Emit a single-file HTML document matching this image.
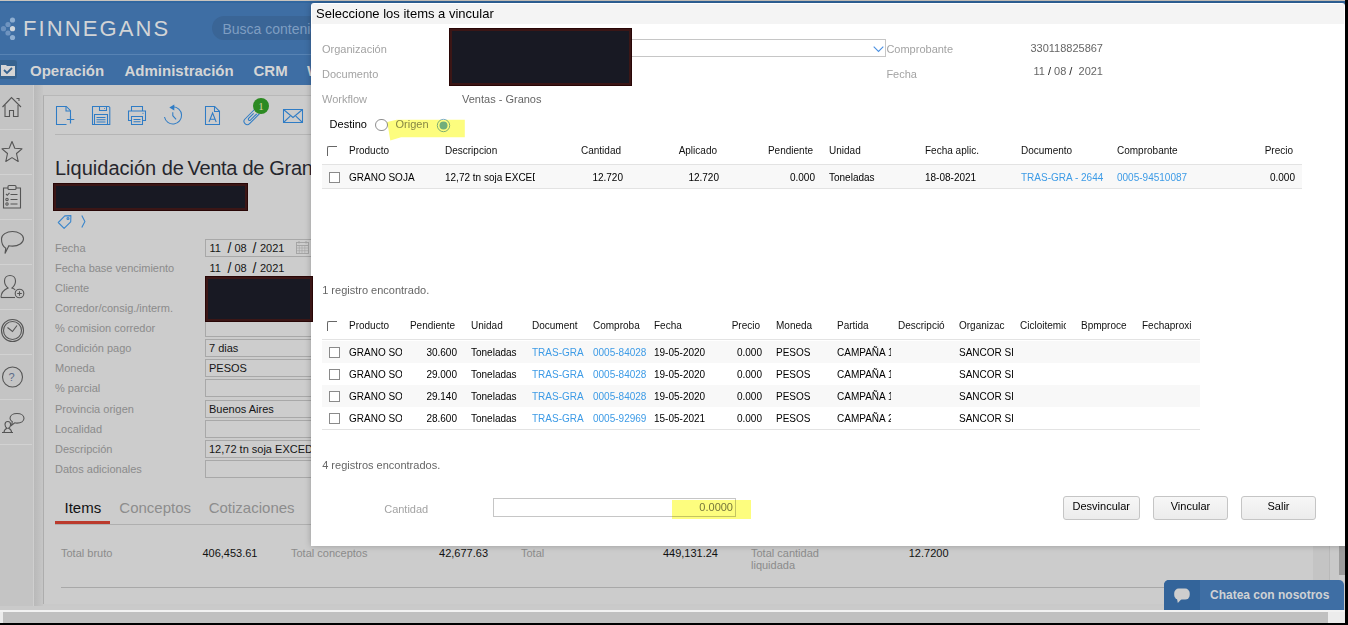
<!DOCTYPE html>
<html><head><meta charset="utf-8">
<style>
*{box-sizing:border-box;margin:0;padding:0}
html,body{width:1348px;height:625px;overflow:hidden;background:#c9c9c9;font-family:"Liberation Sans",sans-serif;position:relative}
.a{position:absolute;white-space:nowrap;line-height:1}
.t10{font-size:10px}.t11{font-size:11px}
</style></head><body>
<!-- ===== BACKGROUND PAGE (dimmed) ===== -->
<div class="a" style="left:0;top:0;width:1348px;height:1px;background:#c9c4be"></div>
<div class="a" id="header" style="left:0;top:1px;width:1348px;height:84px;background:#3e6ea4"></div>
<div class="a" style="left:0;top:1px;width:1348px;height:2px;background:#3167a0"></div>
<div class="a" style="left:0;top:54px;width:1348px;height:1px;background:#5783b4"></div>
<!-- logo -->
<svg class="a" style="left:0;top:15px" width="18" height="26" viewBox="0 0 18 26">
 <circle cx="12.5" cy="5" r="2.6" fill="#8eaed1"/>
 <circle cx="8" cy="9.5" r="2.6" fill="#6f94c0"/>
 <circle cx="3.5" cy="13.7" r="2.6" fill="#6a90bd"/>
 <circle cx="12.5" cy="13.7" r="2.6" fill="#d0d6dc"/>
 <circle cx="8" cy="18" r="2.6" fill="#6f94c0"/>
 <circle cx="12.5" cy="22.5" r="2.6" fill="#8eaed1"/>
</svg>
<div class="a" style="left:23px;top:18px;font-size:22px;color:#d2d4d6;letter-spacing:2.1px;font-weight:400">FINNEGANS</div>
<div class="a" style="left:212px;top:16px;width:140px;height:24px;border-radius:12px;background:#3a6596"></div>
<div class="a" style="left:222.4px;top:22px;font-size:14px;color:#7f9ec2">Busca contenido</div>
<!-- nav -->
<div class="a" style="left:0;top:60px;width:17px;height:19px;border-radius:0 3px 3px 0;background:#36628f"></div>
<svg class="a" style="left:1px;top:64px" width="14" height="12" viewBox="0 0 14 12"><path d="M0 1h5l1 1h8v10H0z" fill="#d5d5d5"/><path d="M3 6l3 3 5-5" stroke="#36628f" stroke-width="1.8" fill="none"/></svg>
<div class="a" style="left:30px;top:63px;font-size:15px;font-weight:700;color:#d5d5d5">Operación</div>
<div class="a" style="left:124.5px;top:63px;font-size:15px;font-weight:700;color:#d5d5d5">Administración</div>
<div class="a" style="left:253.5px;top:63px;font-size:15px;font-weight:700;color:#d5d5d5">CRM</div>
<div class="a" style="left:307px;top:63px;font-size:15px;font-weight:700;color:#d5d5d5">W</div>

<!-- sidebar -->
<div class="a" style="left:0;top:85px;width:33px;height:521px;background:#c4c4c4"></div>
<div class="a" style="left:33px;top:85px;width:1px;height:521px;background:#cfcfcf"></div>
<div class="a" style="left:34px;top:85px;width:9px;height:521px;background:linear-gradient(to right,#b9b9b9,#c6c6c6)"></div>
<div id="sidebar-seps"></div>

<!-- panel -->
<div class="a" style="left:43px;top:95px;width:1305px;height:509px;background:#cccccc;border-left:1px solid #adadad;border-top:1px solid #b8b8b8"></div>
<div class="a" style="left:55px;top:134px;width:260px;height:1px;background:#b5b5b5"></div>

<!--BG-START-->
<div class="a" style="left:0px;top:129px;width:32px;height:1px;background:#d2d2d2;"></div>
<div class="a" style="left:0px;top:174px;width:32px;height:1px;background:#d2d2d2;"></div>
<div class="a" style="left:0px;top:219px;width:32px;height:1px;background:#d2d2d2;"></div>
<div class="a" style="left:0px;top:264px;width:32px;height:1px;background:#d2d2d2;"></div>
<div class="a" style="left:0px;top:309px;width:32px;height:1px;background:#d2d2d2;"></div>
<div class="a" style="left:0px;top:354px;width:32px;height:1px;background:#d2d2d2;"></div>
<div class="a" style="left:0px;top:399px;width:32px;height:1px;background:#d2d2d2;"></div>
<div class="a" style="left:0px;top:444px;width:32px;height:1px;background:#d2d2d2;"></div>
<svg class="a" style="left:0;top:85px" width="32" height="360" viewBox="0 85 32 360" fill="none" stroke="#555" stroke-width="1.1">
<path d="M2.5 107 L11.5 97.5 L21 107"/><path d="M16.5 98.5h2.5v2.5"/><path d="M5 105v11.5h4.5v-6h4v6h4.5V105"/>
<path d="M12 141.5 L14.8 148.3 L22 148.8 L16.5 153.5 L18.2 161.5 L12 157.6 L5.8 161.5 L7.5 153.5 L2 148.8 L9.2 148.3 Z" stroke-linejoin="round"/>
<path d="M8 188h-4.5v20h17v-20H16"/><rect x="8" y="185.5" width="8" height="4" rx="1"/>
<path d="M6 194l1.3 1.3 2.2-2.5"/><circle cx="7" cy="199.5" r="1.2"/><circle cx="7" cy="204" r="1.2"/><path d="M10.5 194.5h7M10.5 199.5h7M10.5 204h7"/>
<path d="M12.5 231.5c6 0 11 3.2 11 7.3s-5 7.3-11 7.3c-1.3 0-2.5-.1-3.6-.4L5 253.5l.8-5.3C3 246.8 1.5 243 1.5 238.8c0-4.1 5-7.3 11-7.3z"/>
<path d="M1 297.5c0-5.5 3.5-8 7-9.5-2.5-2-3.5-4.5-3.5-7 0-3.5 2.5-5.5 5.5-5.5s5.5 2 5.5 5.5c0 2.5-1 5-3.5 7 1.2.5 2.3 1 3.2 1.8"/><path d="M1 297.5h14"/><circle cx="19.5" cy="293.5" r="4.3"/><path d="M17.2 293.5h4.6M19.5 291.2v4.6"/>
<circle cx="12.5" cy="330.5" r="11"/><circle cx="12.5" cy="330.5" r="9"/><path d="M7.5 327.5l5 4 4.5-6"/>
<circle cx="12.5" cy="377" r="10"/>
<path d="M2 432.5h11M4 432.5c0-2.5 1.5-3.5 3-4.2-1.4-1-2-2.5-2-3.8 0-1.8 1.2-3 2.8-3s2.8 1.2 2.8 3c0 1.3-.6 2.8-2 3.8 1.5.7 3 1.7 3 4.2"/><path d="M17 413.5c4 0 7 2 7 4.8s-3 4.8-7 4.8c-.8 0-1.5-.1-2.2-.3l-3.3 2.5.8-3.5c-1.5-.9-2.3-2.1-2.3-3.5 0-2.8 3-4.8 7-4.8z"/>
</svg>
<div class="a" style="left:8.5px;top:372px;font-size:11px;color:#5a6a88">?</div>
<svg class="a" style="left:50px;top:95px" width="260" height="35" viewBox="50 95 260 35" fill="none" stroke="#2f7cc5" stroke-width="1.05">
<path d="M66.5 124.5H56.5V106.5h9.8l4.2 4.2v5.3"/><path d="M66 106.5v4.5h4.5"/><path d="M70.5 116v7.5M66.8 119.5h7.5" stroke-width="1.2"/>
<path d="M92.5 106.5h16.3l1 1V124.5H92.5z"/><path d="M99.5 106.5v4h7v-4"/><circle cx="104.5" cy="108.5" r="0.5" fill="#2f7cc5" stroke="none"/><path d="M94.5 124.5v-10h13v10"/><path d="M96.5 117.5h9M96.5 119.7h9M96.5 121.9h9"/>
<path d="M131.5 111v-4.5h11v4.5"/><path d="M131 120.5h-2.5v-9.5h17v9.5H143"/><path d="M131.5 124.5v-8h11v8z"/><path d="M133.5 119.5h7M133.5 121.7h7"/><circle cx="143" cy="113.3" r="0.6" fill="#2f7cc5" stroke="none"/>
<path d="M164.5 117 A8.6 8.6 0 1 0 173 106.8"/><path d="M172.8 112.3v3.4l3.3 3.6"/>
<path d="M205.5 124.5V106.5h9.2l4.8 4.8V124.5z"/><path d="M214.5 106.5v5h5"/><path d="M209 122l3.6-9 3.6 9M210.3 119.3h4.6"/>
<path d="M259.6 113.6L249.6 123.6A3.25 3.25 0 0 1 245 119L255 109M256.8 113.8L250.4 120.2A1.3 1.3 0 0 1 248.6 118.4L253.6 113.4"/>
<path d="M283.5 109.5h19v13h-19z"/><path d="M283.5 109.5l9.5 8 9.5-8M283.5 122.5l6.7-6.3M302.5 122.5l-6.7-6.3"/>
</svg>
<svg class="a" style="left:160px;top:100px" width="20" height="20" viewBox="160 100 20 20"><path d="M169.3 107.6l5-3v6z" fill="#2f7cc5"/></svg>
<div class="a" style="left:253px;top:98px;width:16px;height:16px;border-radius:50%;background:#2c8a22"></div>
<div class="a" style="left:253px;top:100.5px;width:16px;text-align:center;font-size:11px;color:#d6d2a6;font-family:'Liberation Serif'">1</div>
<div class="a" style="left:55px;top:158px;font-size:20px;color:#26262c">Liquidación de </div>
<div class="a" style="left:187.5px;top:158px;font-size:20px;color:#26262c;letter-spacing:-0.3px">Venta de Granos</div>
<div class="a" style="left:53px;top:183px;width:195px;height:28px;background:#181923;border:1px solid #280606;box-shadow:inset 0 0 0 2px #3b1616"></div>
<svg class="a" style="left:55px;top:212px" width="35" height="20" viewBox="55 212 35 20" fill="none" stroke="#3a86cc" stroke-width="1.1">
<path d="M58.3 222.5l6.5-6.6 6.1-.3-.2 6.2-6.6 6.5z" stroke-linejoin="round"/><circle cx="68" cy="218.5" r="1"/><path d="M81.8 215.5l3.1 6-3.1 6"/></svg>
<div class="a" style="left:55px;top:243px;font-size:11px;color:#8b8b8b;">Fecha</div>
<div class="a" style="left:55px;top:263px;font-size:11px;color:#8b8b8b;">Fecha base vencimiento</div>
<div class="a" style="left:55px;top:283px;font-size:11px;color:#8b8b8b;">Cliente</div>
<div class="a" style="left:55px;top:303px;font-size:11px;color:#8b8b8b;">Corredor/consig./interm.</div>
<div class="a" style="left:55px;top:323px;font-size:11px;color:#8b8b8b;">% comision corredor</div>
<div class="a" style="left:55px;top:343px;font-size:11px;color:#8b8b8b;">Condición pago</div>
<div class="a" style="left:55px;top:363px;font-size:11px;color:#8b8b8b;">Moneda</div>
<div class="a" style="left:55px;top:383px;font-size:11px;color:#8b8b8b;">% parcial</div>
<div class="a" style="left:55px;top:404px;font-size:11px;color:#8b8b8b;">Provincia origen</div>
<div class="a" style="left:55px;top:424px;font-size:11px;color:#8b8b8b;">Localidad</div>
<div class="a" style="left:55px;top:444px;font-size:11px;color:#8b8b8b;">Descripción</div>
<div class="a" style="left:55px;top:464px;font-size:11px;color:#8b8b8b;">Datos adicionales</div>
<div class="a" style="left:205px;top:239px;width:120px;height:18px;background:#cdcdcd;border:1px solid #a8a8a8;border-right:none"></div>
<div class="a" style="left:205px;top:319px;width:120px;height:18px;background:#cdcdcd;border:1px solid #a8a8a8;border-right:none"></div>
<div class="a" style="left:205px;top:339px;width:120px;height:18px;background:#cdcdcd;border:1px solid #a8a8a8;border-right:none"></div>
<div class="a" style="left:209px;top:343px;font-size:11px;color:#151515;">7 dias</div>
<div class="a" style="left:205px;top:359px;width:120px;height:18px;background:#cdcdcd;border:1px solid #a8a8a8;border-right:none"></div>
<div class="a" style="left:209px;top:363px;font-size:11px;color:#151515;">PESOS</div>
<div class="a" style="left:205px;top:379px;width:120px;height:18px;background:#cdcdcd;border:1px solid #a8a8a8;border-right:none"></div>
<div class="a" style="left:205px;top:400px;width:120px;height:18px;background:#cdcdcd;border:1px solid #a8a8a8;border-right:none"></div>
<div class="a" style="left:209px;top:404px;font-size:11px;color:#151515;">Buenos Aires</div>
<div class="a" style="left:205px;top:420px;width:120px;height:18px;background:#cdcdcd;border:1px solid #a8a8a8;border-right:none"></div>
<div class="a" style="left:205px;top:440px;width:120px;height:18px;background:#cdcdcd;border:1px solid #a8a8a8;border-right:none"></div>
<div class="a" style="left:209px;top:444px;font-size:11px;color:#151515;">12,72 tn soja EXCEDENTE</div>
<div class="a" style="left:205px;top:460px;width:120px;height:18px;background:#cdcdcd;border:1px solid #a8a8a8;border-right:none"></div>
<div class="a" style="left:209.5px;top:243px;font-size:11px;color:#151515;">11</div>
<div class="a" style="left:227.5px;top:241px;font-size:14px;font-weight:400;color:#151515">/</div>
<div class="a" style="left:234.5px;top:243px;font-size:11px;color:#151515;">08</div>
<div class="a" style="left:252.5px;top:241px;font-size:14px;font-weight:400;color:#151515">/</div>
<div class="a" style="left:260px;top:243px;font-size:11px;color:#151515;">2021</div>
<div class="a" style="left:209.5px;top:263px;font-size:11px;color:#151515;">11</div>
<div class="a" style="left:227.5px;top:261px;font-size:14px;font-weight:400;color:#151515">/</div>
<div class="a" style="left:234.5px;top:263px;font-size:11px;color:#151515;">08</div>
<div class="a" style="left:252.5px;top:261px;font-size:14px;font-weight:400;color:#151515">/</div>
<div class="a" style="left:260px;top:263px;font-size:11px;color:#151515;">2021</div>
<svg class="a" style="left:295px;top:240px" width="16" height="15" viewBox="295 240 16 15" fill="none" stroke="#a2a2a2" stroke-width="0.9">
<rect x="296.5" y="242.5" width="12" height="11"/><path d="M296.5 245.5h12M299 241v2.5M306 241v2.5"/>
<path d="M296.5 248h12M296.5 250.7h12M299.3 245.5v8M302 245.5v8M304.8 245.5v8" stroke-width="0.6"/></svg>
<div class="a" style="left:64.5px;top:500px;font-size:15px;color:#121212;">Items</div>
<div class="a" style="left:119.3px;top:500px;font-size:15px;color:#8d8d8d;">Conceptos</div>
<div class="a" style="left:208.7px;top:500px;font-size:15px;color:#8d8d8d;">Cotizaciones</div>
<div class="a" style="left:55px;top:524px;width:1260px;height:1px;background:#afafaf;"></div>
<div class="a" style="left:55px;top:521px;width:55px;height:3px;background:#bb3a2c;"></div>
<div class="a" style="left:61px;top:548px;font-size:11px;color:#8b8b8b;">Total bruto</div>
<div class="a" style="right:1090.5px;top:548px;font-size:11px;color:#111;">406,453.61</div>
<div class="a" style="left:291px;top:548px;font-size:11px;color:#8b8b8b;">Total conceptos</div>
<div class="a" style="right:860px;top:548px;font-size:11px;color:#111;">42,677.63</div>
<div class="a" style="left:521px;top:548px;font-size:11px;color:#8b8b8b;">Total</div>
<div class="a" style="right:630px;top:548px;font-size:11px;color:#111;">449,131.24</div>
<div class="a" style="left:751px;top:548px;font-size:11px;color:#8b8b8b;">Total cantidad</div>
<div class="a" style="right:399.5px;top:548px;font-size:11px;color:#111;">12.7200</div>
<div class="a" style="left:751px;top:560px;font-size:11px;color:#8b8b8b;">liquidada</div>
<div class="a" style="left:61px;top:587px;width:1250px;height:1px;background:#a8a8a8;"></div>
<div class="a" style="left:1313px;top:95px;width:16px;height:511px;background:#c4c4c4;"></div>
<div class="a" style="left:1329px;top:95px;width:1px;height:511px;background:#b9b9b9;"></div>
<div class="a" style="left:1330px;top:95px;width:9px;height:511px;background:#c9c9c9;"></div>
<div class="a" style="left:1339px;top:85px;width:6px;height:490px;background:#9c9c9c;"></div>
<!--BG-END-->

<!-- bottom bar -->
<div class="a" style="left:0;top:606px;width:1348px;height:4px;background:#cacaca"></div>
<div class="a" style="left:0;top:610px;width:1348px;height:2px;background:#f2f2f2"></div>
<div class="a" style="left:0;top:612px;width:1348px;height:11px;background:#ececec"></div>
<div class="a" style="left:3px;top:612px;width:1325px;height:11px;background:#c0c0c0"></div>
<div class="a" style="left:0;top:623px;width:1348px;height:2px;background:#000"></div>

<!-- ===== DIALOG ===== -->
<div id="dlgwrap" style="position:absolute;left:0;top:0;width:1348px;height:625px;will-change:transform">
<div id="dialog" class="a" style="left:311px;top:3px;width:1034px;height:543px;background:#fff;border-radius:3px 3px 0 0;box-shadow:0 0 6px rgba(0,0,0,0.25)"></div>
<div class="a" style="left:312px;top:4px;width:1032px;height:20px;background:#f4f4f4"></div>
<div class="a" style="left:316px;top:7px;font-size:13px;color:#000">Seleccione los items a vincular</div>

<!--DLG-START-->
<div class="a" style="left:322.0px;top:44.0px;font-size:11px;color:#a3a3a3;">Organización</div>
<div class="a" style="left:322.0px;top:69.0px;font-size:11px;color:#a3a3a3;">Documento</div>
<div class="a" style="left:322.0px;top:94.0px;font-size:11px;color:#a3a3a3;">Workflow</div>
<div class="a" style="left:462.0px;top:94.0px;font-size:11px;color:#666;">Ventas - Granos</div>
<div class="a" style="left:631px;top:39px;width:255px;height:18px;background:#fff;border:1px solid #c6c6c6;border-left:none"></div>
<svg class="a" style="left:873px;top:46px" width="11" height="7" viewBox="0 0 11 7"><path d="M0.7 0.7L5.5 5.5L10.3 0.7" stroke="#4a90e2" stroke-width="1.1" fill="none"/></svg>
<div class="a" style="left:886.4px;top:44.0px;font-size:11px;color:#a3a3a3;">Comprobante</div>
<div class="a" style="left:886.4px;top:69.0px;font-size:11px;color:#a3a3a3;">Fecha</div>
<div class="a" style="right:245.0px;top:43.0px;font-size:11px;color:#666;">330118825867</div>
<div class="a" style="right:245.0px;top:66.0px;font-size:11px;color:#666;">11 <span style="color:#222">/</span> 08 <span style="color:#222">/</span>&nbsp; 2021</div>
<div class="a" style="left:449px;top:28px;width:183px;height:58px;background:#181923;border:1px solid #280606;box-shadow:inset 0 0 0 2px #3b1616"></div>
<div class="a" style="left:329.6px;top:119.0px;font-size:11px;color:#000;">Destino</div>
<div class="a" style="left:375px;top:118.5px;width:12.5px;height:12.5px;border-radius:50%;border:1px solid #8f8f8f;background:#fff"></div>
<div class="a" style="left:395.5px;top:119.0px;font-size:11px;color:#888888;">Origen</div>
<svg class="a" style="left:436px;top:117.5px" width="15" height="15" viewBox="0 0 15 15"><circle cx="7.5" cy="7.5" r="6.2" fill="#fff" stroke="#7fb0e6" stroke-width="1"/><circle cx="7.5" cy="7.5" r="4" fill="#72b0f8"/></svg>
<div class="a" style="left:327px;top:146px;width:10px;height:10px;background:transparent;border-top:1px solid #666;border-left:1px solid #666;border-top-left-radius:2px"></div>
<div class="a" style="left:349.0px;top:146.0px;font-size:10px;color:#111;">Producto</div>
<div class="a" style="left:445.0px;top:146.0px;font-size:10px;color:#111;">Descripcion</div>
<div class="a" style="right:727.0px;top:146.0px;font-size:10px;color:#111;">Cantidad</div>
<div class="a" style="right:631.0px;top:146.0px;font-size:10px;color:#111;">Aplicado</div>
<div class="a" style="right:535.0px;top:146.0px;font-size:10px;color:#111;">Pendiente</div>
<div class="a" style="left:829.0px;top:146.0px;font-size:10px;color:#111;">Unidad</div>
<div class="a" style="left:925.0px;top:146.0px;font-size:10px;color:#111;">Fecha aplic.</div>
<div class="a" style="left:1021.0px;top:146.0px;font-size:10px;color:#111;">Documento</div>
<div class="a" style="left:1117.0px;top:146.0px;font-size:10px;color:#111;">Comprobante</div>
<div class="a" style="right:55.0px;top:146.0px;font-size:10px;color:#111;">Precio</div>
<div class="a" style="left:322px;top:164px;width:980px;height:1px;background:#e3e3e3;"></div>
<div class="a" style="left:322px;top:165px;width:980px;height:23px;background:#f8f8f8;"></div>
<div class="a" style="left:322px;top:188px;width:980px;height:1px;background:#e3e3e3;"></div>
<div class="a" style="left:329px;top:172px;width:11px;height:11px;background:#fff;border:1px solid #8a8a8a"></div>
<div class="a" style="left:349.0px;top:171.0px;width:90.0px;overflow:hidden;padding-top:2px;font-size:10px;color:#000;">GRANO SOJA</div>
<div class="a" style="left:445.0px;top:171.0px;width:90.0px;overflow:hidden;padding-top:2px;font-size:10px;color:#000;">12,72 tn soja EXCEDENTE</div>
<div class="a" style="right:725.0px;top:173.0px;font-size:10px;color:#000;">12.720</div>
<div class="a" style="right:629.0px;top:173.0px;font-size:10px;color:#000;">12.720</div>
<div class="a" style="right:533.0px;top:173.0px;font-size:10px;color:#000;">0.000</div>
<div class="a" style="left:829.0px;top:173.0px;font-size:10px;color:#000;">Toneladas</div>
<div class="a" style="left:925.0px;top:173.0px;font-size:10px;color:#000;">18-08-2021</div>
<div class="a" style="left:1021.0px;top:173.0px;font-size:10px;color:#3d9be6;">TRAS-GRA - 2644</div>
<div class="a" style="left:1117.0px;top:173.0px;font-size:10px;color:#3d9be6;">0005-94510087</div>
<div class="a" style="right:53.0px;top:173.0px;font-size:10px;color:#000;">0.000</div>
<div class="a" style="left:322.2px;top:285.0px;font-size:11px;color:#666;">1 registro encontrado.</div>
<div class="a" style="left:327px;top:321px;width:10px;height:10px;background:transparent;border-top:1px solid #666;border-left:1px solid #666;border-top-left-radius:2px"></div>
<div class="a" style="left:349.0px;top:319.0px;width:53.0px;overflow:hidden;padding-top:2px;font-size:10px;color:#111;">Producto</div>
<div class="a" style="right:893.0px;top:321.0px;font-size:10px;color:#111;">Pendiente</div>
<div class="a" style="left:471.0px;top:319.0px;width:53.0px;overflow:hidden;padding-top:2px;font-size:10px;color:#111;">Unidad</div>
<div class="a" style="left:532.0px;top:319.0px;width:53.0px;overflow:hidden;padding-top:2px;font-size:10px;color:#111;">Document</div>
<div class="a" style="left:593.0px;top:319.0px;width:53.0px;overflow:hidden;padding-top:2px;font-size:10px;color:#111;">Comproba</div>
<div class="a" style="left:654.0px;top:319.0px;width:53.0px;overflow:hidden;padding-top:2px;font-size:10px;color:#111;">Fecha</div>
<div class="a" style="right:588.0px;top:321.0px;font-size:10px;color:#111;">Precio</div>
<div class="a" style="left:776.0px;top:319.0px;width:53.0px;overflow:hidden;padding-top:2px;font-size:10px;color:#111;">Moneda</div>
<div class="a" style="left:837.0px;top:319.0px;width:53.0px;overflow:hidden;padding-top:2px;font-size:10px;color:#111;">Partida</div>
<div class="a" style="left:898.0px;top:319.0px;width:53.0px;overflow:hidden;padding-top:2px;font-size:10px;color:#111;">Descripció</div>
<div class="a" style="left:959.0px;top:319.0px;width:53.0px;overflow:hidden;padding-top:2px;font-size:10px;color:#111;">Organizac</div>
<div class="a" style="left:1020.0px;top:319.0px;width:46.0px;overflow:hidden;padding-top:2px;font-size:10px;color:#111;">Cicloitemico</div>
<div class="a" style="left:1081.0px;top:319.0px;width:53.0px;overflow:hidden;padding-top:2px;font-size:10px;color:#111;">Bpmproce</div>
<div class="a" style="left:1142.0px;top:319.0px;width:53.0px;overflow:hidden;padding-top:2px;font-size:10px;color:#111;">Fechaproxi</div>
<div class="a" style="left:322px;top:339px;width:878px;height:1px;background:#e3e3e3;"></div>
<div class="a" style="left:322px;top:341px;width:878px;height:22px;background:#f8f8f8;"></div>
<div class="a" style="left:329px;top:347px;width:11px;height:11px;background:#fff;border:1px solid #8a8a8a"></div>
<div class="a" style="left:349.0px;top:346.0px;width:53.0px;overflow:hidden;padding-top:2px;font-size:10px;color:#000;">GRANO SOJA</div>
<div class="a" style="right:891.0px;top:348.0px;font-size:10px;color:#000;">30.600</div>
<div class="a" style="left:471.0px;top:346.0px;width:53.0px;overflow:hidden;padding-top:2px;font-size:10px;color:#000;">Toneladas</div>
<div class="a" style="left:532.0px;top:346.0px;width:53.0px;overflow:hidden;padding-top:2px;font-size:10px;color:#3d9be6;">TRAS-GRA - 2644</div>
<div class="a" style="left:593.0px;top:346.0px;width:53.0px;overflow:hidden;padding-top:2px;font-size:10px;color:#3d9be6;">0005-840287</div>
<div class="a" style="left:654.0px;top:346.0px;width:53.0px;overflow:hidden;padding-top:2px;font-size:10px;color:#000;">19-05-2020</div>
<div class="a" style="right:586.0px;top:348.0px;font-size:10px;color:#000;">0.000</div>
<div class="a" style="left:776.0px;top:346.0px;width:53.0px;overflow:hidden;padding-top:2px;font-size:10px;color:#000;">PESOS</div>
<div class="a" style="left:837.0px;top:346.0px;width:54.0px;overflow:hidden;padding-top:2px;font-size:10px;color:#000;">CAMPAÑA 19/20</div>
<div class="a" style="left:959.0px;top:346.0px;width:54.0px;overflow:hidden;padding-top:2px;font-size:10px;color:#000;">SANCOR SEGUROS</div>
<div class="a" style="left:329px;top:369px;width:11px;height:11px;background:#fff;border:1px solid #8a8a8a"></div>
<div class="a" style="left:349.0px;top:368.0px;width:53.0px;overflow:hidden;padding-top:2px;font-size:10px;color:#000;">GRANO SOJA</div>
<div class="a" style="right:891.0px;top:370.0px;font-size:10px;color:#000;">29.000</div>
<div class="a" style="left:471.0px;top:368.0px;width:53.0px;overflow:hidden;padding-top:2px;font-size:10px;color:#000;">Toneladas</div>
<div class="a" style="left:532.0px;top:368.0px;width:53.0px;overflow:hidden;padding-top:2px;font-size:10px;color:#3d9be6;">TRAS-GRA - 2644</div>
<div class="a" style="left:593.0px;top:368.0px;width:53.0px;overflow:hidden;padding-top:2px;font-size:10px;color:#3d9be6;">0005-840287</div>
<div class="a" style="left:654.0px;top:368.0px;width:53.0px;overflow:hidden;padding-top:2px;font-size:10px;color:#000;">19-05-2020</div>
<div class="a" style="right:586.0px;top:370.0px;font-size:10px;color:#000;">0.000</div>
<div class="a" style="left:776.0px;top:368.0px;width:53.0px;overflow:hidden;padding-top:2px;font-size:10px;color:#000;">PESOS</div>
<div class="a" style="left:837.0px;top:368.0px;width:54.0px;overflow:hidden;padding-top:2px;font-size:10px;color:#000;">CAMPAÑA 19/20</div>
<div class="a" style="left:959.0px;top:368.0px;width:54.0px;overflow:hidden;padding-top:2px;font-size:10px;color:#000;">SANCOR SEGUROS</div>
<div class="a" style="left:322px;top:385px;width:878px;height:22px;background:#f8f8f8;"></div>
<div class="a" style="left:329px;top:391px;width:11px;height:11px;background:#fff;border:1px solid #8a8a8a"></div>
<div class="a" style="left:349.0px;top:390.0px;width:53.0px;overflow:hidden;padding-top:2px;font-size:10px;color:#000;">GRANO SOJA</div>
<div class="a" style="right:891.0px;top:392.0px;font-size:10px;color:#000;">29.140</div>
<div class="a" style="left:471.0px;top:390.0px;width:53.0px;overflow:hidden;padding-top:2px;font-size:10px;color:#000;">Toneladas</div>
<div class="a" style="left:532.0px;top:390.0px;width:53.0px;overflow:hidden;padding-top:2px;font-size:10px;color:#3d9be6;">TRAS-GRA - 2644</div>
<div class="a" style="left:593.0px;top:390.0px;width:53.0px;overflow:hidden;padding-top:2px;font-size:10px;color:#3d9be6;">0005-840287</div>
<div class="a" style="left:654.0px;top:390.0px;width:53.0px;overflow:hidden;padding-top:2px;font-size:10px;color:#000;">19-05-2020</div>
<div class="a" style="right:586.0px;top:392.0px;font-size:10px;color:#000;">0.000</div>
<div class="a" style="left:776.0px;top:390.0px;width:53.0px;overflow:hidden;padding-top:2px;font-size:10px;color:#000;">PESOS</div>
<div class="a" style="left:837.0px;top:390.0px;width:54.0px;overflow:hidden;padding-top:2px;font-size:10px;color:#000;">CAMPAÑA 19/20</div>
<div class="a" style="left:959.0px;top:390.0px;width:54.0px;overflow:hidden;padding-top:2px;font-size:10px;color:#000;">SANCOR SEGUROS</div>
<div class="a" style="left:329px;top:413px;width:11px;height:11px;background:#fff;border:1px solid #8a8a8a"></div>
<div class="a" style="left:349.0px;top:412.0px;width:53.0px;overflow:hidden;padding-top:2px;font-size:10px;color:#000;">GRANO SOJA</div>
<div class="a" style="right:891.0px;top:414.0px;font-size:10px;color:#000;">28.600</div>
<div class="a" style="left:471.0px;top:412.0px;width:53.0px;overflow:hidden;padding-top:2px;font-size:10px;color:#000;">Toneladas</div>
<div class="a" style="left:532.0px;top:412.0px;width:53.0px;overflow:hidden;padding-top:2px;font-size:10px;color:#3d9be6;">TRAS-GRA - 2644</div>
<div class="a" style="left:593.0px;top:412.0px;width:53.0px;overflow:hidden;padding-top:2px;font-size:10px;color:#3d9be6;">0005-929697</div>
<div class="a" style="left:654.0px;top:412.0px;width:53.0px;overflow:hidden;padding-top:2px;font-size:10px;color:#000;">15-05-2021</div>
<div class="a" style="right:586.0px;top:414.0px;font-size:10px;color:#000;">0.000</div>
<div class="a" style="left:776.0px;top:412.0px;width:53.0px;overflow:hidden;padding-top:2px;font-size:10px;color:#000;">PESOS</div>
<div class="a" style="left:837.0px;top:412.0px;width:54.0px;overflow:hidden;padding-top:2px;font-size:10px;color:#000;">CAMPAÑA 20/21</div>
<div class="a" style="left:959.0px;top:412.0px;width:54.0px;overflow:hidden;padding-top:2px;font-size:10px;color:#000;">SANCOR SEGUROS</div>
<div class="a" style="left:322px;top:429px;width:878px;height:1px;background:#e3e3e3;"></div>
<div class="a" style="left:322.2px;top:460.0px;font-size:11px;color:#666;">4 registros encontrados.</div>
<div class="a" style="left:384.2px;top:504.0px;font-size:11px;color:#a3a3a3;">Cantidad</div>
<div class="a" style="left:493px;top:498px;width:243px;height:19px;background:#fff;border:1px solid #c6c6c6"></div>
<div class="a" style="right:615.0px;top:502.0px;font-size:11px;color:#777777;">0.0000</div>
<div class="a" style="left:1063px;top:495.5px;width:76.5px;height:24.5px;border:1px solid #c5c5c5;border-radius:3px;background:linear-gradient(#f7f7f7,#ececec)"></div>
<div class="a" style="left:1063px;top:501.2px;width:76.5px;text-align:center;font-size:11px;color:#000">Desvincular</div>
<div class="a" style="left:1153px;top:495.5px;width:75px;height:24.5px;border:1px solid #c5c5c5;border-radius:3px;background:linear-gradient(#f7f7f7,#ececec)"></div>
<div class="a" style="left:1153px;top:501.2px;width:75px;text-align:center;font-size:11px;color:#000">Vincular</div>
<div class="a" style="left:1241px;top:495.5px;width:75px;height:24.5px;border:1px solid #c5c5c5;border-radius:3px;background:linear-gradient(#f7f7f7,#ececec)"></div>
<div class="a" style="left:1241px;top:501.2px;width:75px;text-align:center;font-size:11px;color:#000">Salir</div>
<svg class="a" style="left:380px;top:115px;mix-blend-mode:multiply" width="90" height="30" viewBox="380 115 90 30"><polygon points="387.2,122 396.5,119.7 464.8,119.7 464.8,137.3 401,137.3 390.3,140.4" fill="#fdfd7e"/></svg>
<div class="a" style="left:672px;top:500px;width:79px;height:18.5px;background:#fdfd7e;mix-blend-mode:multiply"></div>
<!--DLG-END-->

</div>
<!-- over-dialog redacted box -->
<div class="a" style="left:205px;top:276px;width:108px;height:46px;background:#181923;border:1px solid #280606;box-shadow:inset 0 0 0 2px #3b1616"></div>
<!-- chat widget -->
<div class="a" style="left:1164px;top:580px;width:180px;height:30px;background:#3e6ea4;border-radius:5px 5px 0 0"></div>
<div class="a" style="left:1164px;top:580px;width:36px;height:30px;background:#33649a;border-radius:5px 0 0 0"></div>
<svg class="a" style="left:1172px;top:586px" width="20" height="18" viewBox="0 0 20 18"><rect x="2.2" y="2.6" width="15.5" height="11" rx="4.5" fill="#cecece"/><path d="M5 12.5h5L5.8 17z" fill="#cecece"/></svg>
<div class="a" style="left:1210px;top:589px;font-size:12px;font-weight:700;color:#d0d2d4">Chatea con nosotros</div>
<!-- right black strip -->
<div class="a" style="left:1345px;top:0;width:3px;height:625px;background:#000"></div>
</body></html>
